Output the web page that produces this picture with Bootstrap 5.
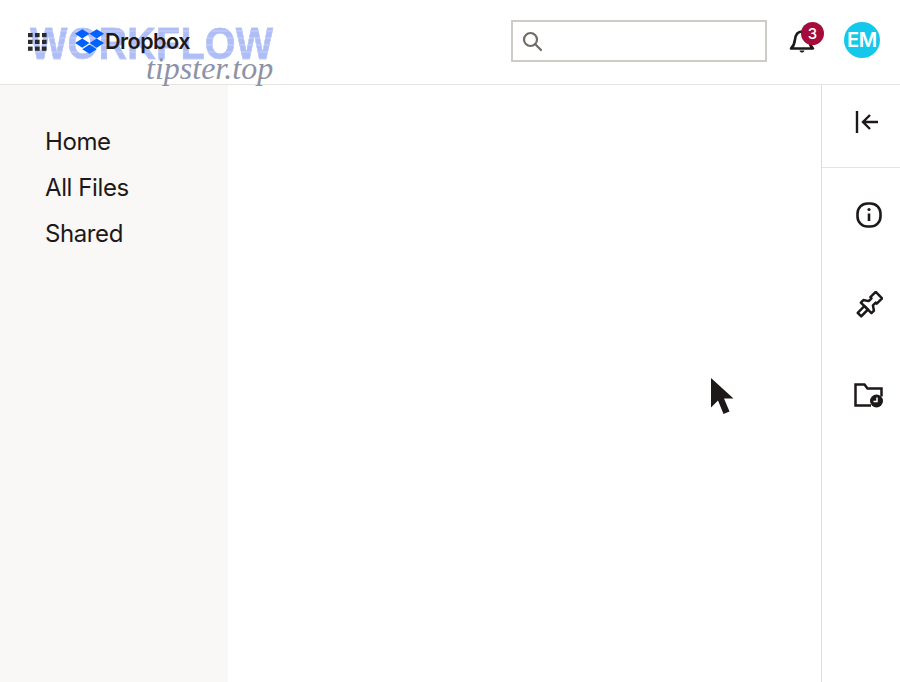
<!DOCTYPE html>
<html lang="en">
<head>
<meta charset="utf-8">
<title>Dropbox</title>
<link href="https://cdn.jsdelivr.net/npm/bootstrap@5.3.0/dist/css/bootstrap.min.css" rel="stylesheet">
<style>
html,body{height:100%;margin:0;overflow:hidden;background:#fff;color:#1e1919;font-family:"Inter","Liberation Sans",sans-serif}
.app-shell{height:682px;width:900px;position:relative}
.top-bar{height:85px;border-bottom:1px solid #e6e4e1;padding:0 20px 2px 28px}
.brand-zone{position:relative;width:245px;height:40px;margin-top:2px}
.grid-ico{width:19px;height:18px;flex:none}
.drop-ico{width:29px;height:25px;flex:none;margin-left:28px;margin-top:-2px}
.drop-word{font-size:21.500px;font-weight:600;letter-spacing:-.5px;margin-left:1px;line-height:1}
.wm-main{position:absolute;left:2px;top:-4px;font:900 44px/1.2 "Liberation Sans",sans-serif;letter-spacing:.2px;white-space:nowrap;z-index:0;transform:scaleX(.9);transform-origin:left;color:transparent;-webkit-text-stroke:.4px #b4c2f6;background:repeating-linear-gradient(180deg,#aebdf6 0 5px,#bcc8f7 5px 7px);-webkit-background-clip:text;background-clip:text}
.wm-sub{position:absolute;left:118px;top:30px;font:italic 400 32px/1 "Liberation Serif",serif;color:#8e92a6;white-space:nowrap;z-index:3}
.brand-front{position:relative;z-index:2}
.search-box{width:256px;height:42px;border:2px solid #cfccc8;background:#fff;padding-left:8px;margin-right:22px}
.bell-wrap{position:relative;width:26px;height:28px;margin-right:29px;margin-bottom:2px}
.bell-count{position:absolute;left:12px;top:-4px;width:23px;height:23px;border-radius:50%;background:#a50c3c;color:#fff;font-size:15px;font-weight:500;line-height:23px;text-align:center}
.user-dot{width:36px;height:36px;border-radius:50%;background:#14c8eb;color:#fff;font-size:20px;font-weight:600;line-height:36px;text-align:center;letter-spacing:-.2px;margin-bottom:2px}
.body-row{height:597px}
.side-nav{width:228px;background:#f9f8f6;padding:34px 0 0 45px}
.side-link{display:block;font-size:24px;line-height:45.750px;font-weight:400;color:#1e1919;text-decoration:none;letter-spacing:-.4px}
.main-area{position:relative}
.rail{width:79px;border-left:1px solid #dedcd9}
.rail-top{height:83px;border-bottom:1px solid #e6e4e1;padding:0 0 8px 12px}
.rail-item{height:90px;padding:3px 0 0 15px}
.pointer-ico{position:absolute;left:482px;top:292px;width:24px;height:38px}
</style>
</head>
<body>
<div class="app-shell d-flex flex-column">
  <header class="top-bar d-flex align-items-center">
    <div class="brand-zone d-flex align-items-center">
      <span class="wm-main">WORKFLOW</span>
      <svg class="grid-ico brand-front" viewBox="0 0 19 18" fill="#2b2a2e"><rect x="0" y="0" width="4.600" height="4.200"/><rect x="7" y="0" width="4.600" height="4.200"/><rect x="14" y="0" width="4.600" height="4.200"/><rect x="0" y="6.800" width="4.600" height="4.200"/><rect x="7" y="6.800" width="4.600" height="4.200"/><rect x="14" y="6.800" width="4.600" height="4.200"/><rect x="0" y="13.600" width="4.600" height="4.200"/><rect x="7" y="13.600" width="4.600" height="4.200"/><rect x="14" y="13.600" width="4.600" height="4.200"/></svg>
      <svg class="drop-ico brand-front" viewBox="0 0 30 25.600" fill="#0061fe"><path d="M7.500 0 0 4.800l7.500 4.800L15 4.800zM22.500 0 15 4.800l7.500 4.800L30 4.800zM0 14.400l7.500 4.800L15 14.400 7.500 9.600zM22.500 9.600 15 14.400l7.500 4.800 7.500-4.800zM7.500 20.800l7.500 4.800 7.500-4.800L15 16z"/></svg>
      <span class="drop-word brand-front">Dropbox</span>
      <span class="wm-sub">tipster.top</span>
    </div>
    <div class="flex-grow-1"></div>
    <div class="search-box d-flex align-items-center">
      <svg width="22" height="22" viewBox="0 0 22 22" fill="none" stroke="#6f6b67" stroke-width="2.200"><circle cx="9.500" cy="9.500" r="6.500"/><path d="M14.300 14.300 20 20" stroke-linecap="round"/></svg>
    </div>
    <div class="bell-wrap">
      <svg width="26" height="28" viewBox="0 0 26 28" fill="none" stroke="#1e1919" stroke-width="2.600" stroke-linejoin="round"><path d="M2 22.500c2.600-2.200 3.400-4.500 3.800-8C6.300 9 8.300 5.500 13 5.500s6.700 3.500 7.200 9c.4 3.500 1.200 5.800 3.800 8z"/><path d="M10.500 24.500c.5 1.400 1.300 2 2.500 2s2-.6 2.500-2z" fill="#1e1919" stroke="none"/></svg>
      <span class="bell-count">3</span>
    </div>
    <div class="user-dot">EM</div>
  </header>
  <div class="body-row d-flex">
    <nav class="side-nav">
      <a class="side-link" href="#">Home</a>
      <a class="side-link" href="#">All Files</a>
      <a class="side-link" href="#">Shared</a>
    </nav>
    <main class="main-area flex-grow-1">
      <svg class="pointer-ico" viewBox="0 0 24 38" fill="#1e1919"><path d="M1 1v29.500l7-7 5.500 13.500 6-2.500-5.500-13h9.500z"/></svg>
    </main>
    <aside class="rail">
      <div class="rail-top d-flex align-items-center justify-content-center">
        <svg width="24" height="24" viewBox="0 0 24 24" fill="none" stroke="#1e1919" stroke-width="2.400"><path d="M2 1v22"/><path d="M23 12H8.500M15 5 8 12l7 7"/></svg>
      </div>
      <div class="rail-item d-flex align-items-center justify-content-center">
        <svg width="26" height="26" viewBox="0 0 26 26" fill="none" stroke="#1e1919" stroke-width="2.600"><rect x="1.500" y="1.500" width="23" height="23" rx="10"/><path d="M13 11.500v7.500"/><circle cx="13" cy="7.500" r="1.600" fill="#1e1919" stroke="none"/></svg>
      </div>
      <div class="rail-item d-flex align-items-center justify-content-center">
        <svg width="28" height="28" viewBox="0 0 28 28" fill="none" stroke="#1e1919" stroke-width="2.500" stroke-linejoin="round"><g transform="rotate(45 14 14)"><path d="M9.500 0h9v7.500h-1.500v4l4.500 3v3.500H6.500v-3.500l4.500-3v-4H9.500z"/><path d="M11.500 18h5v9.500h-5z"/></g></svg>
      </div>
      <div class="rail-item d-flex align-items-center justify-content-center">
        <svg width="30" height="26" viewBox="0 0 30 26" fill="none" stroke="#1e1919" stroke-width="2.500"><path d="M17 23.500H1.500V2.500h9l3 4h14v8"/><circle cx="22.500" cy="19" r="6.500" fill="#1e1919" stroke="none"/><path d="M23 15.500v4h-3.500" stroke="#fff" stroke-width="1.500"/></svg>
      </div>
    </aside>
  </div>
</div>
</body>
</html>
